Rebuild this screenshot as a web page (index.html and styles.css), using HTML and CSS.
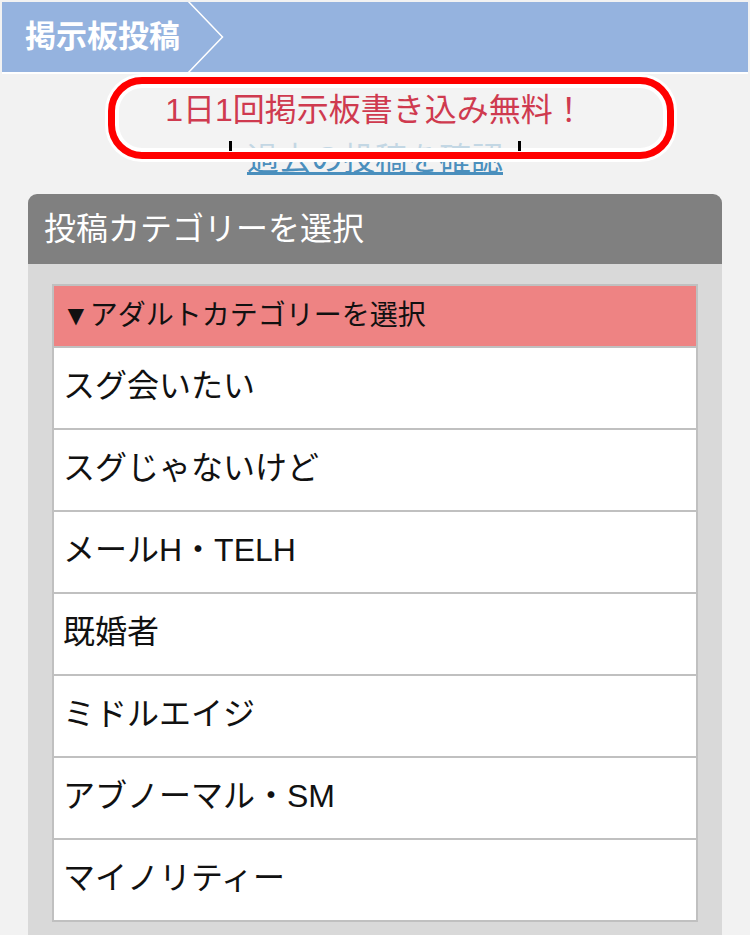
FILE: index.html
```html
<!DOCTYPE html>
<html lang="ja">
<head>
    <meta charset="UTF-8">
    <meta name="viewport" content="width=device-width, initial-scale=1.0">
    <title>掲示板投稿</title>
    <link rel="stylesheet" href="styles.css">
</head>
<body>
    <div class="topbar">
        <h1 class="topbar-title">掲示板投稿</h1>
        <svg class="topbar-arrow" width="40" height="70" viewBox="0 0 40 70">
            <polyline points="1,-2 36.5,35 1,72" fill="none" stroke="#fff" stroke-width="1.5"/>
        </svg>
    </div>

    <div class="notice">
        <div class="stamp">1日1回掲示板書き込み無料！</div>
        <div class="history"><a href="#" class="history-link">過去の投稿を確認</a></div>
    </div>

    <div class="card">
        <div class="card-head">投稿カテゴリーを選択</div>
        <div class="card-body">
            <ul class="cat-list">
                <li class="cat-title">▼アダルトカテゴリーを選択</li>
                <li class="cat-item"><a href="#">スグ会いたい</a></li>
                <li class="cat-item"><a href="#">スグじゃないけど</a></li>
                <li class="cat-item"><a href="#">メールH・TELH</a></li>
                <li class="cat-item"><a href="#">既婚者</a></li>
                <li class="cat-item"><a href="#">ミドルエイジ</a></li>
                <li class="cat-item"><a href="#">アブノーマル・SM</a></li>
                <li class="cat-item"><a href="#">マイノリティー</a></li>
            </ul>
        </div>
    </div>
</body>
</html>
```

FILE: styles.css
```css
body {
    margin: 0;
    background-color: #f2f2f2;
    font-family: "Liberation Sans", "Noto Sans CJK JP", sans-serif;
    color: #111;
}
.topbar {
    display: flex;
    align-items: center;
    height: 70px;
    margin: 2px 2px 0;
    border-bottom: 2px solid #fff;
    background-color: #95b3df;
    overflow: hidden;
}
.topbar-title {
    margin: 0 0 0 23px;
    font-size: 31px;
    font-weight: bold;
    color: #fff;
    line-height: 70px;
}
.topbar-arrow {
    display: block;
    margin-left: 6px;
}
.notice {
    text-align: center;
    padding-top: 3px;
}
.stamp {
    position: relative;
    z-index: 2;
    box-sizing: border-box;
    width: 566px;
    height: 82px;
    margin: 0 0 0 108px;
    padding: 6px 32px 0 0;
    border: 7px solid #ff0000;
    border-radius: 34px;
    background-color: rgba(242, 242, 242, 0.72);
    box-shadow: 0 0 0 3px #fff, inset 0 0 0 4px #fff;
    color: #cf3a4f;
    font-size: 32px;
    line-height: 40px;
}
.history {
    margin-top: -20px;
    font-size: 32px;
    line-height: 40px;
}
.history-link {
    color: #4a8fbd;
}
.history-link::before,
.history-link::after {
    content: "";
    position: relative;
    z-index: 3;
    display: inline-block;
    width: 3px;
    height: 10px;
    background-color: #000;
    vertical-align: 19px;
}
.history-link::before {
    margin-right: 15px;
}
.history-link::after {
    margin-left: 15px;
}
.card {
    margin: 15px 28px 0;
}
.card-head {
    height: 70px;
    padding-left: 16px;
    border-radius: 9px 9px 0 0;
    background-color: #808080;
    color: #fff;
    font-size: 32px;
    line-height: 70px;
}
.card-body {
    padding: 20px 24px 20px;
    background-color: #d9d9d9;
}
.cat-list {
    list-style: none;
    margin: 0;
    padding: 0;
    border: 2px solid #c0c0c0;
    border-bottom: none;
}
.cat-title {
    height: 60px;
    padding-left: 8px;
    border-bottom: 2px solid #c0c0c0;
    background-color: #ee8383;
    font-size: 28px;
    line-height: 60px;
}
.cat-item {
    border-bottom: 2px solid #c0c0c0;
    background-color: #fff;
}
.cat-item a {
    display: block;
    height: 80px;
    padding-left: 9px;
    color: #111;
    text-decoration: none;
    font-size: 32px;
    line-height: 76px;
}
```
